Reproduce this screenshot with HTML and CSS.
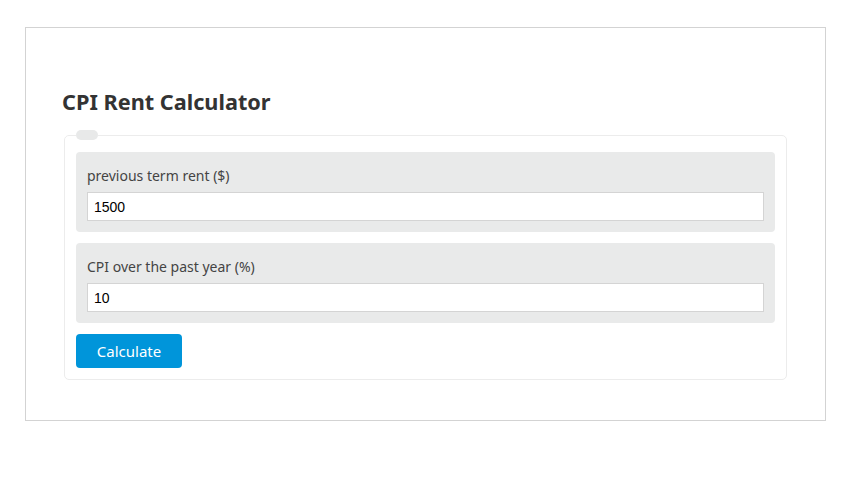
FILE: index.html
```html
<!DOCTYPE html>
<html lang="en">
<head>
    <meta charset="UTF-8">
    <meta name="viewport" content="width=device-width, initial-scale=1.0">
    <title>CPI Rent Calculator</title>
    <link rel="stylesheet" href="styles.css">
</head>
<body>
    <div class="container">
        <h2 class="title">CPI Rent Calculator</h2>
        <fieldset class="calc">
            <legend class="calc-legend"></legend>
            <div class="field">
                <label for="rent">previous term rent ($)</label>
                <input class="input" id="rent" type="text" value="1500">
            </div>
            <div class="field">
                <label for="cpi">CPI over the past year (%)</label>
                <input class="input" id="cpi" type="text" value="10">
            </div>
            <button class="btn">Calculate</button>
        </fieldset>
    </div>
</body>
</html>
```

FILE: styles.css
```css
*{
    padding: 0;
    margin: 0;
    box-sizing: border-box;
}
body{
    background: #fff;
    font-family: "Noto Sans", "Open Sans", sans-serif;
    color: #444;
}
.container{
    width: 801px;
    margin: 27px 0 0 25px;
    border: 1px solid #d3d3d3;
    padding: 58px 38px 40px 38px;
}
.title{
    font-size: 21.7px;
    line-height: 32px;
    font-weight: 700;
    color: #333;
    margin-left: -2px;
    margin-bottom: 12px;
}
.calc{
    border: 1px solid #ececec;
    border-radius: 5px;
    padding: 12px 11px 11px 11px;
}
.calc-legend{
    width: 22px;
    height: 10px;
    margin-left: 0;
    background: #e8e9e9;
    border-radius: 5px;
}
.field{
    background: #e9eaea;
    border-radius: 4px;
    padding: 14px 11px 11px 11px;
    margin-bottom: 11px;
}
.field label{
    display: block;
    font-size: 14px;
    line-height: 20px;
    color: #444;
    margin-bottom: 6px;
}
.input{
    display: block;
    width: 100%;
    height: 29px;
    border: 1px solid #d4d4d4;
    background: #fff;
    padding: 0 6px;
    font-family: "Liberation Sans", Arial, sans-serif;
    font-size: 14px;
    color: #000;
}
.btn{
    display: block;
    width: 106px;
    height: 34px;
    background: #0095da;
    color: #fff;
    border: none;
    border-radius: 4px;
    font-family: "Noto Sans", "Open Sans", sans-serif;
    font-size: 15px;
    cursor: pointer;
}
```
